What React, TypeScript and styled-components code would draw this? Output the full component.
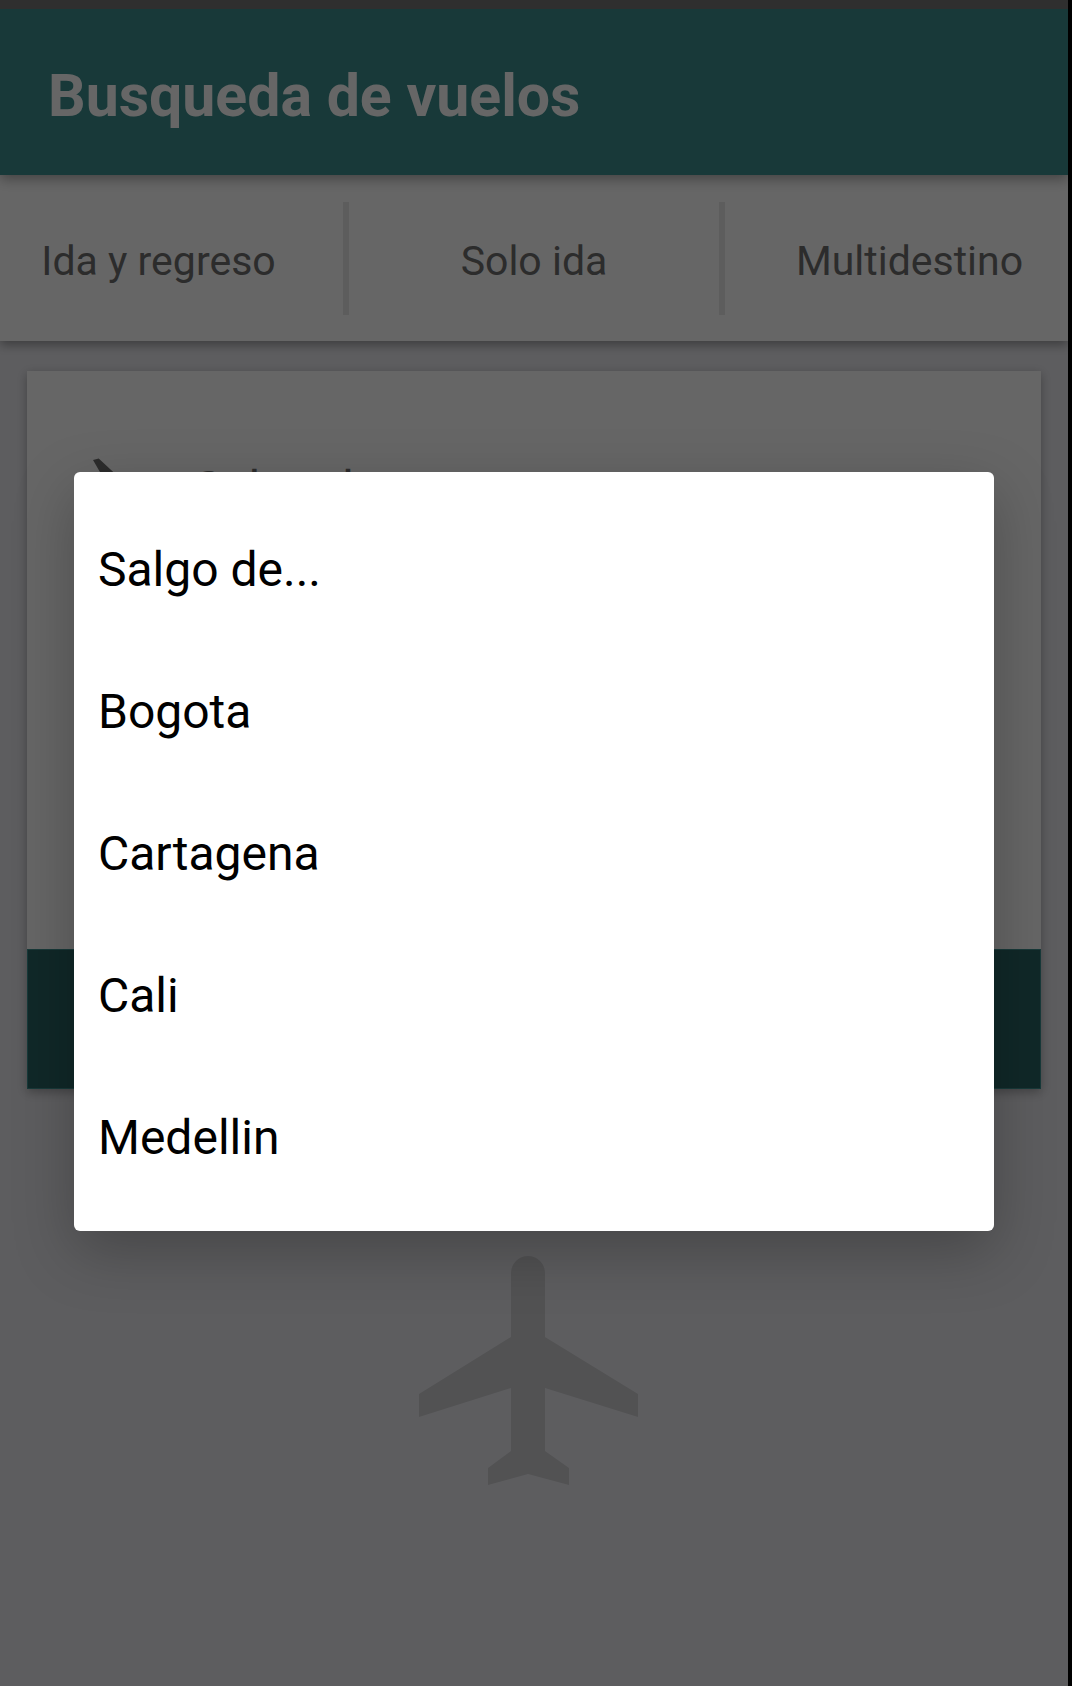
import React from "react";
import styled, { createGlobalStyle } from "styled-components";

const GlobalStyle = createGlobalStyle`
  *, *::before, *::after { box-sizing: border-box; }
  body { margin: 0; background: #000; font-family: Roboto, "Noto Sans", sans-serif; }
`;

const Screen = styled.div`
  display: flex;
  flex-direction: column;
  min-height: 100vh;
  margin-right: 4px;
  position: relative;
  overflow: hidden;
  background: #e9e9ee;
`;

const StatusBar = styled.div`
  position: relative;
  z-index: 3;
  height: 9px;
  background: #757575;
`;

const Header = styled.header`
  position: relative;
  z-index: 2;
  display: flex;
  align-items: center;
  height: 166px;
  padding: 8px 48px 0;
  background: #3c8e8e;
  box-shadow: 0 4px 12px rgba(0, 0, 0, 0.35);
`;

const Title = styled.h1`
  margin: 0;
  color: #fff;
  font-size: 59px;
  line-height: 70px;
  font-weight: 700;
`;

const Tabs = styled.nav`
  position: relative;
  z-index: 1;
  display: grid;
  grid-template-columns: 343fr 6px 370fr 6px 343fr;
  align-items: center;
  height: 166px;
  background: #fff;
  box-shadow: 0 4px 10px rgba(0, 0, 0, 0.35);
`;

const Tab = styled.button`
  padding: 5px 0 0;
  border: 0;
  background: none;
  color: #6e6e6e;
  font: 400 41px/50px Roboto, sans-serif;

  &:first-child { padding-right: 26px; }
  &:last-child { padding-left: 26px; }
`;

const Divider = styled.span`
  height: 113px;
  background: #e8e8e8;
`;

const Content = styled.main`
  display: flex;
  flex-direction: column;
  align-items: center;
  padding: 30px 27px;
`;

const Card = styled.section`
  display: flex;
  flex-direction: column;
  justify-content: space-between;
  align-self: stretch;
  height: 718px;
  background: #fff;
  box-shadow: 0 3px 10px rgba(0, 0, 0, 0.3);
`;

const Field = styled.button`
  display: flex;
  align-items: flex-start;
  gap: 48px;
  padding: 77px 48px 0;
  border: 0;
  background: none;
  color: #6e6e6e;
  font: 400 48px/82px Roboto, sans-serif;
`;

const SearchButton = styled.button`
  height: 140px;
  border: 1px solid #3c8e8e;
  background: #286464;
  color: #fff;
  font: 400 41px/50px Roboto, sans-serif;
`;

const Plane = styled.svg`
  width: 284px;
  height: 276px;
  margin: 147px 12px 0 0;
  fill: #cdcdd0;
`;

const Overlay = styled.div`
  position: absolute;
  inset: 0;
  z-index: 4;
  padding: 472px 74px 0;
  background: rgba(0, 0, 0, 0.6);
`;

const Options = styled.ul`
  margin: 0;
  padding: 24px 0 25px;
  list-style: none;
  border-radius: 6px;
  background: #fff;
  box-shadow: 0 20px 60px rgba(0, 0, 0, 0.25);
`;

const Option = styled.button`
  display: block;
  width: 100%;
  height: 142px;
  padding: 5px 24px 0;
  border: 0;
  background: none;
  color: #000;
  text-align: left;
  font: 400 48px/56px Roboto, sans-serif;
`;

const cities = ["Salgo de...", "Bogota", "Cartagena", "Cali", "Medellin"];

export default function App() {
  return (
    <>
      <GlobalStyle />
      <Screen>
        <StatusBar />
        <Header>
          <Title>Busqueda de vuelos</Title>
        </Header>
        <Tabs>
          <Tab>Ida y regreso</Tab>
          <Divider />
          <Tab>Solo ida</Tab>
          <Divider />
          <Tab>Multidestino</Tab>
        </Tabs>
        <Content>
          <Card>
            <Field>
              <svg width="71" height="71" viewBox="0 0 24 24" fill="currentColor" aria-hidden="true">
                <path d="M2.5 19h19v2h-19zM22.07 9.64c-.21-.8-1.04-1.28-1.84-1.06L14.92 10l-6.9-6.43-1.93.51 4.14 7.17-4.97 1.33-1.97-1.54-1.45.39 2.59 4.49 16.02-4.28c.81-.23 1.28-1.05 1.07-1.85z" />
              </svg>
              Salgo de...
            </Field>
            <SearchButton aria-label="Buscar" />
          </Card>
          <Plane viewBox="0 0 284 276" aria-hidden="true">
            <path d="M142 20a17 17 0 0 1 17 17v64l93 57v23l-93-29v63l24 17v17l-41-11-40 11v-17l23-17v-63l-92 29v-23l92-57V37a17 17 0 0 1 17-17z" />
          </Plane>
        </Content>
        <Overlay>
          <Options>
            {cities.map((city) => (
              <li key={city}>
                <Option>{city}</Option>
              </li>
            ))}
          </Options>
        </Overlay>
      </Screen>
    </>
  );
}
